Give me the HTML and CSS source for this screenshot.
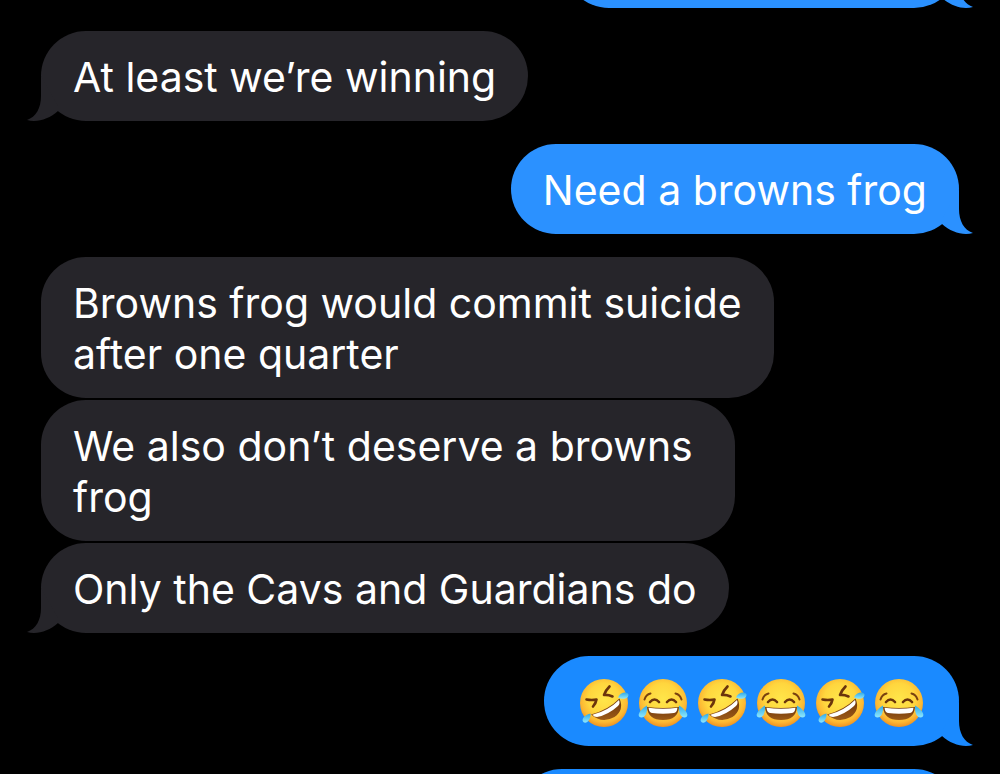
FILE: index.html
```html
<!DOCTYPE html>
<html lang="en">
<head>
    <meta charset="UTF-8">
    <meta name="viewport" content="width=device-width, initial-scale=1.0">
    <title>Messages</title>
    <link rel="stylesheet" href="styles.css">
</head>
<body>

    <!-- shared shapes -->
    <svg class="defs" aria-hidden="true">
        <defs>
            <radialGradient id="face" cx="0.5" cy="0.42" r="0.6">
                <stop offset="0" stop-color="#ffe64a"/>
                <stop offset="0.55" stop-color="#ffd63e"/>
                <stop offset="0.8" stop-color="#fcb833"/>
                <stop offset="1" stop-color="#ec8a1e"/>
            </radialGradient>
            <linearGradient id="mouth" x1="0" y1="0" x2="0" y2="1">
                <stop offset="0" stop-color="#6b340c"/>
                <stop offset="1" stop-color="#9c5a16"/>
            </linearGradient>
            <linearGradient id="tear" x1="0" y1="0" x2="0" y2="1">
                <stop offset="0" stop-color="#2fa9e8"/>
                <stop offset="1" stop-color="#8fe8fc"/>
            </linearGradient>
        </defs>
        <symbol id="tail" viewBox="0 0 32 45">
            <path d="M14 0V20C14 32 9 41 0 44C10 47 22 43 31 35V30Z"/>
        </symbol>
        <symbol id="joy" viewBox="0 0 50 48">
            <circle cx="25" cy="24" r="24" fill="url(#face)"/>
            <path d="M6.5 20.5Q8 15.5 12.5 14.5M43.5 20.5Q42 15.5 37.5 14.5" fill="none" stroke="#7a4210" stroke-width="2" stroke-linecap="round"/>
            <path d="M12 23Q16.5 18 21 23M29 23Q33.5 18 38 23" fill="none" stroke="#6b340c" stroke-width="2.6" stroke-linecap="round"/>
            <path d="M9 28Q25 30 41 28Q40 41 25 41Q10 41 9 28Z" fill="url(#mouth)"/>
            <path d="M10.5 28.8Q25 30.8 39.5 28.8Q39 33.5 36 34Q25 35.5 14 34Q11 33.5 10.5 28.8Z" fill="#fff"/>
            <path d="M9 26.5C9.5 33 7.5 38.5 3.5 38.5C-1.5 38 0 32 9 26.5Z" fill="url(#tear)"/>
            <path d="M41 26.5C40.5 33 42.5 38.5 46.5 38.5C51.5 38 50 32 41 26.5Z" fill="url(#tear)"/>
        </symbol>
        <symbol id="rofl" viewBox="0 0 50 48">
            <circle cx="25" cy="24" r="24" fill="url(#face)"/>
            <path d="M7.5 20.5Q13 21.5 17.5 20.5Q17 24 14 27.5M30.5 7.5Q26.5 11.5 25 16Q29 15.5 33.5 17.5" fill="none" stroke="#6b340c" stroke-width="2.6" stroke-linecap="round" stroke-linejoin="round"/>
            <path d="M12 35.5Q29 31 40.5 19.5Q45.5 31 35.5 38Q23 45 12 35.5Z" fill="url(#mouth)"/>
            <path d="M13.5 35.8Q29 32 40 21Q41.5 24.5 39 27Q29 36 18 38Q15 38 13.5 35.8Z" fill="#fff"/>
            <path d="M11.5 34.5C12 40 8.5 44.5 5 43.5C1.5 41.5 4.5 36 11.5 34.5Z" fill="url(#tear)"/>
            <path d="M39 18.5C41 13 48.5 12 49.5 15.5C49.5 20.5 43 20.5 39 18.5Z" fill="url(#tear)"/>
        </symbol>
    </svg>

    <main class="thread">
        <div class="bubble sent previous">
            <svg class="tail" aria-hidden="true"><use href="#tail"/></svg>
        </div>

        <div class="bubble received">
            At least we’re winning
            <svg class="tail" aria-hidden="true"><use href="#tail"/></svg>
        </div>

        <div class="bubble sent">
            Need a browns frog
            <svg class="tail" aria-hidden="true"><use href="#tail"/></svg>
        </div>

        <div class="group">
            <div class="bubble received">Browns frog would commit suicide<br>after one quarter</div>
            <div class="bubble received wide">We also don’t deserve a browns<br>frog</div>
            <div class="bubble received">
                Only the Cavs and Guardians do
                <svg class="tail" aria-hidden="true"><use href="#tail"/></svg>
            </div>
        </div>

        <div class="bubble sent recent emojis">
            <svg class="emoji" role="img" aria-label="rolling on the floor laughing"><use href="#rofl"/></svg>
            <svg class="emoji" role="img" aria-label="tears of joy"><use href="#joy"/></svg>
            <svg class="emoji" role="img" aria-label="rolling on the floor laughing"><use href="#rofl"/></svg>
            <svg class="emoji" role="img" aria-label="tears of joy"><use href="#joy"/></svg>
            <svg class="emoji" role="img" aria-label="rolling on the floor laughing"><use href="#rofl"/></svg>
            <svg class="emoji" role="img" aria-label="tears of joy"><use href="#joy"/></svg>
            <svg class="tail" aria-hidden="true"><use href="#tail"/></svg>
        </div>

        <div class="bubble sent recent next"></div>
    </main>

</body>
</html>
```
FILE: styles.css
```css
body {
    margin: 0;
    background-color: #000;
    color: #fff;
    font-family: Inter, 'Liberation Sans', sans-serif;
    font-size: 41px;
    line-height: 51px;
}

.defs {
    position: absolute;
    width: 0;
    height: 0;
}

.thread {
    box-sizing: border-box;
    display: flex;
    flex-direction: column;
    gap: 23px;
    height: 100vh;
    padding: 0 41px;
    overflow: hidden;
}

.group {
    display: flex;
    flex-direction: column;
    flex-shrink: 0;
    gap: 2px;
}

.bubble {
    position: relative;
    box-sizing: border-box;
    flex-shrink: 0;
    min-height: 90px;
    padding: 21px 32px 18px;
    border-radius: 45px;
}

.received {
    align-self: flex-start;
    background-color: #26252a;
    fill: #26252a;
}

.sent {
    align-self: flex-end;
    background-color: #2b91ff;
    fill: #2b91ff;
}

.recent {
    background-color: #1a8aff;
    fill: #1a8aff;
}

/* the tail hangs off the bottom corner of the bubble */
.tail {
    position: absolute;
    bottom: 0;
    left: -14px;
    width: 32px;
    height: 45px;
}

.sent .tail {
    left: auto;
    right: -14px;
    transform: scaleX(-1);
}

.wide {
    min-width: 694px;
}

.emojis {
    display: flex;
    align-items: center;
    gap: 9px;
    padding: 21px 35px 18px;
}

.emoji {
    width: 50px;
    height: 48px;
}

/* scrolled mostly out of view */
.previous {
    width: 395px;
    margin-top: -82px;
}

.next {
    width: 442px;
}
```
